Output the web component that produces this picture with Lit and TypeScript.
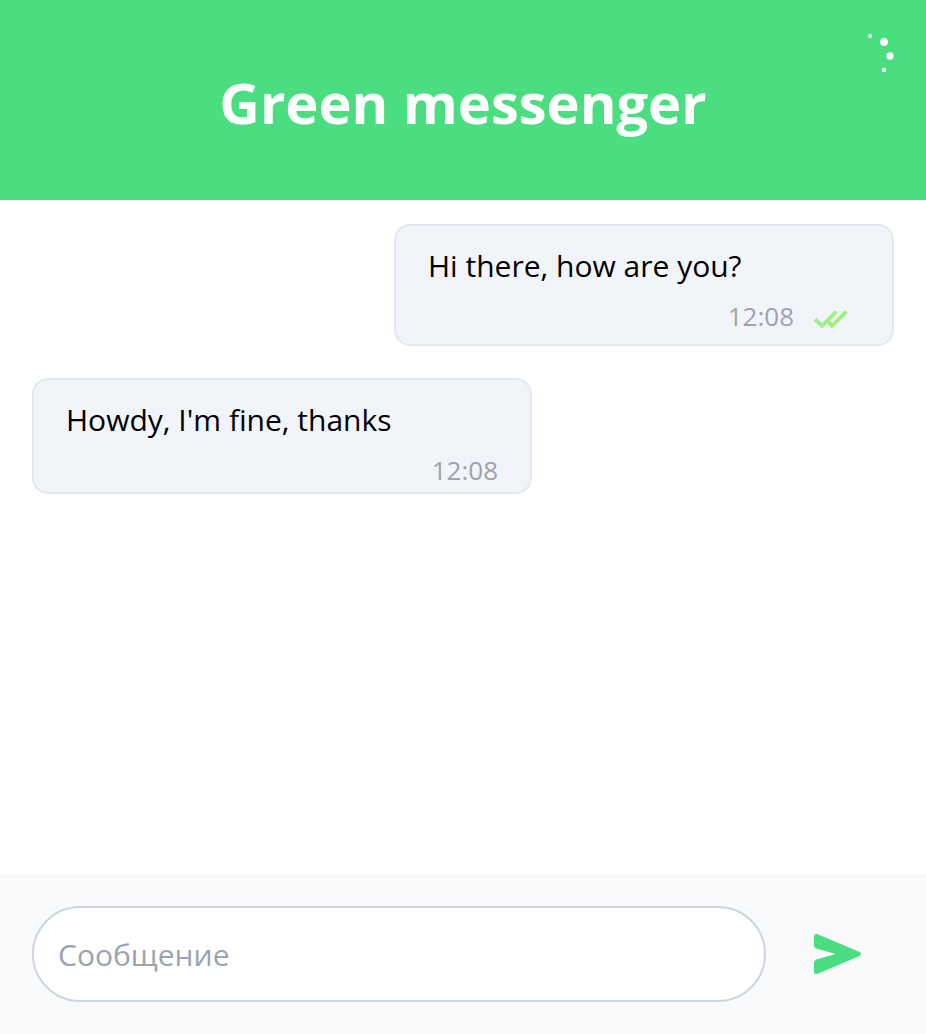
import { LitElement, html, css, svg, nothing } from "lit";
import { customElement, property, state } from "lit/decorators.js";

interface Message {
  text: string;
  time: string;
  own: boolean;
}

@customElement("chat-message")
class ChatMessage extends LitElement {
  @property({ attribute: false }) message!: Message;

  static styles = css`
    :host {
      display: flex;
    }
    .bubble {
      box-sizing: border-box;
      width: 500px;
      max-width: 100%;
      padding: 16px 32px 0;
      border: 2px solid #e2e8f0;
      border-radius: 16px;
      background: #f1f5f9;
      color: #000;
    }
    .own {
      margin-left: auto;
    }
    .text {
      margin: 0;
      font-size: 30px;
      line-height: 48px;
      overflow-wrap: anywhere;
    }
    .meta {
      display: flex;
      justify-content: flex-end;
      gap: 18px;
      padding-top: 4px;
      color: #9ca3af;
      font-size: 26px;
      line-height: 44px;
    }
    .read {
      display: block;
      width: 48px;
      height: 50px;
    }
  `;

  render() {
    const { text, time, own } = this.message;
    return html`
      <article class="bubble ${own ? "own" : ""}">
        <p class="text">${text}</p>
        <div class="meta">
          <time>${time}</time>
          ${own
            ? html`<svg class="read" viewBox="0 4 48 50" role="img" aria-label="read"
                fill="none" stroke="#a0ee84" stroke-width="3.9">
                <path d="M3 29.3 10 35.8 24.4 21.6M15.6 31 20 35.8 34.4 21.6" />
              </svg>`
            : nothing}
        </div>
      </article>
    `;
  }
}

@customElement("app-root")
class AppRoot extends LitElement {
  @state() private messages: Message[] = [
    { text: "Hi there, how are you?", time: "12:08", own: true },
    { text: "Howdy, I'm fine, thanks", time: "12:08", own: false },
  ];

  static styles = css`
    :host {
      display: flex;
      flex-direction: column;
      min-height: 100vh;
      background: #fff;
      font-family: "Open Sans", "Noto Sans", sans-serif;
    }
    .header {
      display: grid;
      grid-template-columns: 1fr auto 1fr;
      padding: 32px;
      background: #4ade80;
      color: #fff;
    }
    .title {
      grid-column: 2;
      margin: 0;
      padding: 34px 0 30px;
      font-size: 56px;
      line-height: 72px;
      font-weight: 700;
    }
    .spinner {
      justify-self: end;
      width: 48px;
      height: 48px;
      overflow: visible;
    }
    .messages {
      flex: 1;
      display: flex;
      flex-direction: column;
      gap: 32px;
      padding: 24px 32px;
    }
    .composer {
      display: flex;
      gap: 24px;
      padding: 32px 40px 32px 32px;
      background: #f8fafc;
    }
    .input {
      box-sizing: border-box;
      flex: 1;
      min-width: 0;
      height: 96px;
      padding: 0 24px;
      border: 2px solid #cbd5e1;
      border-radius: 48px;
      background: #fff;
      color: #000;
      font: inherit;
      font-size: 30px;
    }
    .input::placeholder {
      color: #9ca3af;
    }
    .send {
      display: grid;
      place-items: center;
      width: 96px;
      height: 96px;
      padding: 0;
      border: 0;
      background: none;
      color: #4ade80;
      cursor: pointer;
    }
    .plane {
      width: 48px;
      height: 48px;
    }
  `;

  private send(event: Event) {
    event.preventDefault();
    const input = this.renderRoot.querySelector("input")!;
    const text = input.value.trim();
    if (!text) return;
    const time = new Date().toTimeString().slice(0, 5);
    this.messages = [...this.messages, { text, time, own: true }];
    input.value = "";
  }

  render() {
    const dots = [
      [10, 10, 1, 0.15],
      [24, 4, 1.9, 1],
      [38, 10, 3.9, 1],
      [44, 24, 3.7, 1],
      [38, 38, 2.3, 1],
    ];
    return html`
      <header class="header">
        <h1 class="title">Green messenger</h1>
        <svg class="spinner" viewBox="0 0 48 48" fill="currentColor" role="img" aria-label="loading">
          ${dots.map(([x, y, r, o]) => svg`<circle cx=${x} cy=${y} r=${r} opacity=${o} />`)}
        </svg>
      </header>
      <main class="messages">
        ${this.messages.map((m) => html`<chat-message .message=${m}></chat-message>`)}
      </main>
      <form class="composer" @submit=${this.send}>
        <input class="input" type="text" placeholder="Сообщение" aria-label="Сообщение" />
        <button class="send" type="submit" aria-label="Отправить">
          <svg class="plane" viewBox="0 0 48 48" fill="currentColor" aria-hidden="true">
            <path d="M0 7Q0 3 3.6 4.2L45 21.8Q49 24 45 26.2L3.6 43.8Q0 45 0 41V32.5Q0 30.2 2.4 29.4L21.5 24 2.4 18.6Q0 17.8 0 15.5Z" />
          </svg>
        </button>
      </form>
    `;
  }
}
